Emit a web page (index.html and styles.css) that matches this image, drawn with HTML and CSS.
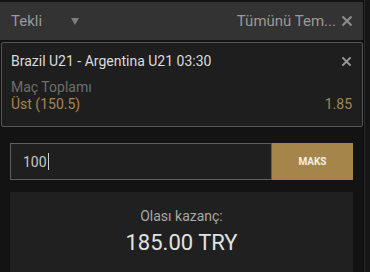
FILE: index.html
```html
<!DOCTYPE html>
<html>
<head>
<meta charset="utf-8">
<link rel="stylesheet" href="styles.css">
</head>
<body>
<div class="page">
  <main class="slip">
    <header class="head">
      <div class="type">Tekli<span class="caret"></span></div>
      <div class="clear">Tümünü Tem... <svg class="x big" viewBox="0 0 12 12"><path d="M1.5 1.5 L10.5 10.5 M10.5 1.5 L1.5 10.5"/></svg></div>
    </header>
    <section class="card">
      <div class="row">
        <span class="match">Brazil U21 - Argentina U21 03:30</span>
        <svg class="x" viewBox="0 0 12 12"><path d="M1.5 1.5 L10.5 10.5 M10.5 1.5 L1.5 10.5"/></svg>
      </div>
      <div class="market">Maç Toplamı</div>
      <div class="row">
        <span class="gold">Üst (150.5)</span>
        <span class="gold">1.85</span>
      </div>
    </section>
    <div class="stake">
      <div class="input"><span class="val">100</span><span class="cursor"></span></div>
      <button class="max">MAKS</button>
    </div>
    <section class="win">
      <div class="label">Olası kazanç:</div>
      <div class="amount">185.00 TRY</div>
    </section>
  </main>
  <div class="scroll"><div class="track"></div></div>
</div>
</body>
</html>
```

FILE: styles.css
```css
html, body {
  margin: 0;
  padding: 0;
  background: #131313;
  font-family: Roboto, "Liberation Sans", sans-serif;
  width: 370px;
  height: 272px;
  overflow: hidden;
}
.page {
  display: flex;
  height: 272px;
}
.slip {
  width: 363px;
  display: flex;
  flex-direction: column;
}
.head {
  margin-top: 2px;
  height: 38px;
  background: #333333;
  display: flex;
  align-items: center;
  justify-content: space-between;
  padding: 0 10px 0 11px;
  font-size: 15px;
  color: #9a9a9a;
}
.type {
  display: flex;
  align-items: center;
}
.caret {
  display: inline-block;
  margin-left: 29px;
  width: 0;
  height: 0;
  border-left: 4px solid transparent;
  border-right: 4px solid transparent;
  border-top: 7px solid #7d7d7d;
}
.clear {
  display: flex;
  align-items: center;
  gap: 5px;
}
.x {
  width: 11px;
  height: 11px;
  stroke: #9a9a9a;
  stroke-width: 2.2;
  fill: none;
}
.x.big {
  width: 12px;
  height: 12px;
  stroke: #8a8a8a;
}
.card {
  margin: 2px 0 0 1px;
  height: 85px;
  box-sizing: border-box;
  border: 1px solid #555;
  border-radius: 2px;
  background: #1e1e1e;
  padding: 10px 10px 0 9px;
  font-size: 14px;
  line-height: 17px;
}
.row {
  display: flex;
  justify-content: space-between;
  align-items: center;
}
.match {
  color: #dcdcdc;
}
.market {
  margin-top: 9px;
  color: #6e6e6e;
}
.gold {
  color: #a8874d;
}
.stake {
  margin: 16px 10px 0 10px;
  height: 37px;
  display: flex;
}
.input {
  flex: 1;
  box-sizing: border-box;
  border: 1px solid #5e5e5e;
  background: #1f1f1f;
  display: flex;
  align-items: center;
  padding-left: 12px;
  font-size: 14px;
  color: #c8c8c8;
}
.cursor {
  width: 1px;
  height: 17px;
  background: #d0d0d0;
  margin-left: 1px;
}
.max {
  width: 81px;
  border: 0;
  background: #a6854a;
  color: #f4f0e8;
  font-family: Roboto, "Liberation Sans", sans-serif;
  font-weight: 700;
  font-size: 10px;
  padding: 0;
}
.win {
  margin: 12px 10px 0 10px;
  flex: 1;
  background: #202020;
  display: flex;
  flex-direction: column;
  align-items: center;
  padding-top: 16px;
}
.label {
  font-size: 14px;
  color: #a8a8a8;
  line-height: 17px;
}
.amount {
  font-size: 22px;
  color: #e2e2e2;
  line-height: 26px;
  margin-top: 5px;
}
.scroll {
  width: 7px;
  display: flex;
  background: #161616;
}
.track {
  width: 1px;
  background: #2c2c2c;
  border-left: 1px solid #0b0b0b;
}
```
